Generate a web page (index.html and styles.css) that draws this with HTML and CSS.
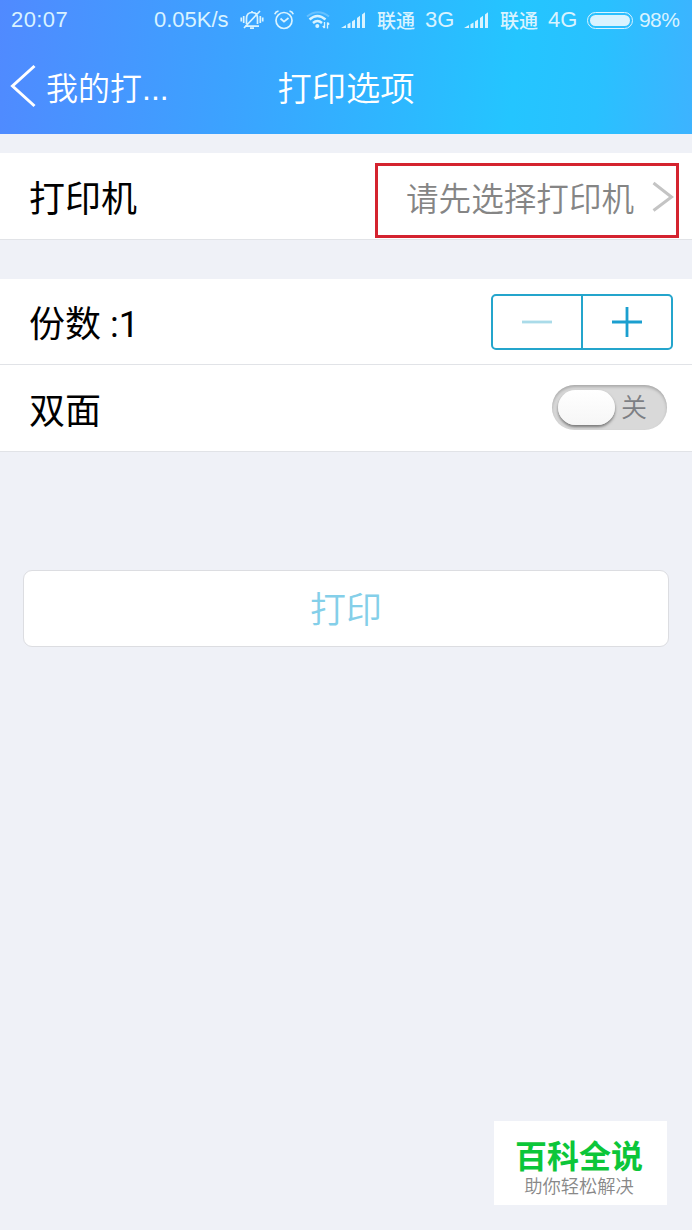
FILE: index.html
```
<!DOCTYPE html>
<html lang="zh-CN">
<head>
  <meta charset="UTF-8" />
  <meta name="viewport" content="width=device-width, initial-scale=1.0"/>
  <title>打印选项</title>
  <link rel="stylesheet" href="styles.css">
</head>
<body>
  <header class="header">
    <div class="status-bar">
      <span class="time">20:07</span>
      <span class="speed">0.05K/s</span>
      <svg class="icon-mute" width="24" height="22" viewBox="0 0 24 22">
        <path d="M6.500 15V9.500Q6.500 3.500 12 3.500T17.500 9.500V15M5 17.200H19M10 19.200H14M12 2V3.500M4 19L20 2M3.700 7V14M1.300 8.500V12.500M20.300 7V14M22.700 8.500V12.500"/>
      </svg>
      <svg class="icon-alarm" width="22" height="22" viewBox="0 0 22 22">
        <circle cx="11" cy="11.500" r="8"/>
        <path d="M7.500 9.500L11 12.700L15.500 9M1.800 5.200Q2.500 2.700 5.500 2M20.200 5.200Q19.500 2.700 16.500 2"/>
      </svg>
      <svg class="icon-wifi" width="24" height="22" viewBox="0 0 24 22">
        <path class="faint" d="M1 7.500Q12 -1 23 7.500"/>
        <path d="M3.500 10.500Q11.500 3.500 19.500 10.500M7 14Q11.500 10 16 14"/>
        <circle cx="11.300" cy="17" r="2"/>
        <path class="arrows" d="M18.500 13V19M16.800 17L18.500 19.200M21.500 19.500V13.500M23.200 15.500L21.500 13.300"/>
      </svg>
      <svg class="icon-signal" width="25" height="18" viewBox="0 0 25 18">
        <path d="M0 17L5 14V17ZM6.500 13.200L9.500 11.400V17H6.500ZM11 10.400L14 8.400V17H11ZM16 7L19 4.800V17H16ZM21 3.500L24 1.200V17H21Z"/>
      </svg>
      <span class="carrier">联通</span>
      <span class="network">3G</span>
      <svg class="icon-signal" width="25" height="18" viewBox="0 0 25 18">
        <path d="M0 17L5 14V17ZM6.500 13.200L9.500 11.400V17H6.500ZM11 10.400L14 8.400V17H11ZM16 7L19 4.800V17H16ZM21 3.500L24 1.200V17H21Z"/>
      </svg>
      <span class="carrier">联通</span>
      <span class="network">4G</span>
      <span class="battery"></span>
      <span class="percent">98%</span>
    </div>
    <nav class="nav">
      <a class="back">
        <svg width="26" height="44" viewBox="0 0 26 44">
          <path d="M24.500 2L2.500 22L24.500 42"/>
        </svg>
        <span>我的打<span class="dots">...</span></span>
      </a>
      <h1>打印选项</h1>
    </nav>
  </header>

  <main>
    <section class="group">
      <div class="row">
        <span class="label">打印机</span>
        <a class="picker">
          <span>请先选择打印机</span>
          <svg width="22" height="32" viewBox="0 0 22 32">
            <path d="M1.500 2L19.500 16L1.500 29.500"/>
          </svg>
        </a>
      </div>
    </section>

    <section class="group">
      <div class="row">
        <span class="label label-count">份数 <span class="count">:1</span></span>
        <div class="stepper">
          <button class="minus" aria-label="减少">
            <svg width="30" height="30" viewBox="0 0 30 30"><path d="M0 15H30"/></svg>
          </button>
          <button class="plus" aria-label="增加">
            <svg width="30" height="30" viewBox="0 0 30 30"><path d="M0 15H30M15 0V30"/></svg>
          </button>
        </div>
      </div>
      <div class="row">
        <span class="label">双面</span>
        <div class="switch">
          <span class="knob"></span>
          <span class="switch-text">关</span>
        </div>
      </div>
    </section>

    <button class="print">打印</button>
  </main>

  <div class="watermark">
    <strong>百科全说</strong>
    <span>助你轻松解决</span>
  </div>
</body>
</html>
```
FILE: styles.css
```
* {
  box-sizing: border-box;
}
body {
  margin: 0;
  height: 1230px;
  overflow: hidden;
  position: relative;
  background: #eff1f7;
  color: #000;
  font-family: "Noto Sans CJK SC", sans-serif;
}
button {
  font-family: inherit;
  padding: 0;
  background: none;
  border: none;
}
svg {
  display: block;
  flex: none;
  fill: none;
}
.header {
  height: 134px;
  background: linear-gradient(95deg, #508aff 0%, #3ca2ff 33%, #24c5ff 74%, #29c1ff 86%, #3db3ff 100%);
  color: #fff;
}

/* status bar */
.status-bar {
  display: flex;
  align-items: center;
  height: 40px;
  padding-left: 11px;
  color: #d9f3ff;
  font-family: "Liberation Sans", "Noto Sans CJK SC", sans-serif;
  font-size: 22px;
  white-space: nowrap;
}
.status-bar svg {
  stroke: #d9f3ff;
  stroke-width: 1.7;
}
.time {
  width: 143px;
  letter-spacing: 0.4px;
}
.speed {
  width: 86px;
}
.icon-mute {
  margin-right: 9px;
}
.icon-alarm {
  margin-right: 11px;
}
.status-bar .icon-wifi {
  margin-right: 11px;
  stroke-width: 2.5;
}
.icon-wifi circle {
  fill: #d9f3ff;
  stroke: none;
}
.icon-wifi .faint {
  opacity: 0.3;
  stroke-width: 2;
}
.icon-wifi .arrows {
  stroke-width: 1.3;
}
.status-bar .icon-signal {
  fill: #d9f3ff;
  stroke: none;
  margin-right: 11px;
}
.carrier {
  width: 48px;
  margin-top: -2px;
  font-size: 19px;
  font-weight: 500;
}
.network {
  width: 39px;
}
.battery {
  width: 46px;
  height: 17px;
  margin-right: 6px;
  border: 1px solid #d9f3ff;
  border-radius: 9px;
}
.battery::before {
  content: "";
  display: block;
  height: 11px;
  margin: 2px;
  border-radius: 6px;
  background: #d9f3ff;
}
.percent {
  font-size: 21px;
  letter-spacing: -0.6px;
}

/* title bar */
.nav {
  display: grid;
  grid-template-columns: 1fr auto 1fr;
  align-items: center;
  height: 94px;
  padding: 0 10px 2px;
}
.back {
  display: flex;
  align-items: center;
  gap: 10px;
  font-size: 32px;
  font-weight: 350;
}
.back svg {
  stroke: #fff;
  stroke-width: 3;
}
.dots {
  font-family: "Liberation Sans", sans-serif;
}
h1 {
  margin: 0;
  font-size: 34.300px;
  font-weight: 350;
}

/* option rows */
.group {
  margin-top: 19px;
  background: #fff;
}
.group + .group {
  margin-top: 39px;
}
.row {
  display: flex;
  align-items: center;
  justify-content: space-between;
  height: 86.500px;
  padding-left: 29px;
  border-bottom: 1px solid #e1e3e7;
}
.label {
  font-size: 36px;
  line-height: 52px;
}
.label-count {
  padding-top: 3px;
}
.count {
  margin-left: 1px;
  font-family: Roboto, sans-serif;
}
.picker {
  display: flex;
  align-items: center;
  justify-content: space-between;
  width: 304px;
  height: 75px;
  margin: 10px 13px 0 0;
  padding: 0 2px 8px 28px;
  border: 3px solid #d4232f;
  color: #858585;
  font-size: 32.600px;
  font-weight: 350;
}
.picker svg {
  stroke: #c4c4c4;
  stroke-width: 3;
}
.stepper {
  display: flex;
  width: 182px;
  height: 56px;
  margin: 2px 19px 0 0;
  border: 2px solid #24a5cc;
  border-radius: 5px;
}
.stepper button {
  flex: 1;
  display: flex;
  align-items: center;
  justify-content: center;
}
.stepper .plus {
  border-left: 2px solid #24a5cc;
}
.stepper svg {
  stroke: #1b9fcf;
  stroke-width: 2.800;
}
.stepper .minus svg {
  stroke: #aadbe9;
}
.switch {
  display: flex;
  align-items: center;
  width: 115px;
  height: 45px;
  margin-right: 25px;
  padding-left: 6px;
  border-radius: 23px;
  background: #d9d9d9;
  box-shadow: inset 0 2px 3px #aaa;
}
.knob {
  width: 57px;
  height: 35px;
  border-radius: 18px;
  background: linear-gradient(#fff, #f6f6f6);
  box-shadow: 0 2px 3px #777;
}
.switch-text {
  margin: -4px 0 0 6px;
  color: #7d7f84;
  font-size: 26px;
  font-weight: 350;
  line-height: 40px;
}
.print {
  display: block;
  width: 646px;
  height: 77px;
  margin: 118px auto 0;
  padding-bottom: 3px;
  border: 1px solid #dcdde1;
  border-radius: 9px;
  background: #fff;
  color: #84cfe9;
  font-size: 36px;
  font-weight: 350;
}

.watermark {
  position: absolute;
  right: 25px;
  bottom: 25px;
  width: 173px;
  height: 84px;
  padding: 13px 3px 0 0;
  background: #fff;
  text-align: center;
}
.watermark strong,
.watermark span {
  display: block;
}
.watermark strong {
  color: #0cc639;
  font-size: 32px;
  line-height: 40px;
}
.watermark span {
  color: #888;
  font-size: 18.300px;
  font-weight: 350;
  line-height: 22px;
}
```
